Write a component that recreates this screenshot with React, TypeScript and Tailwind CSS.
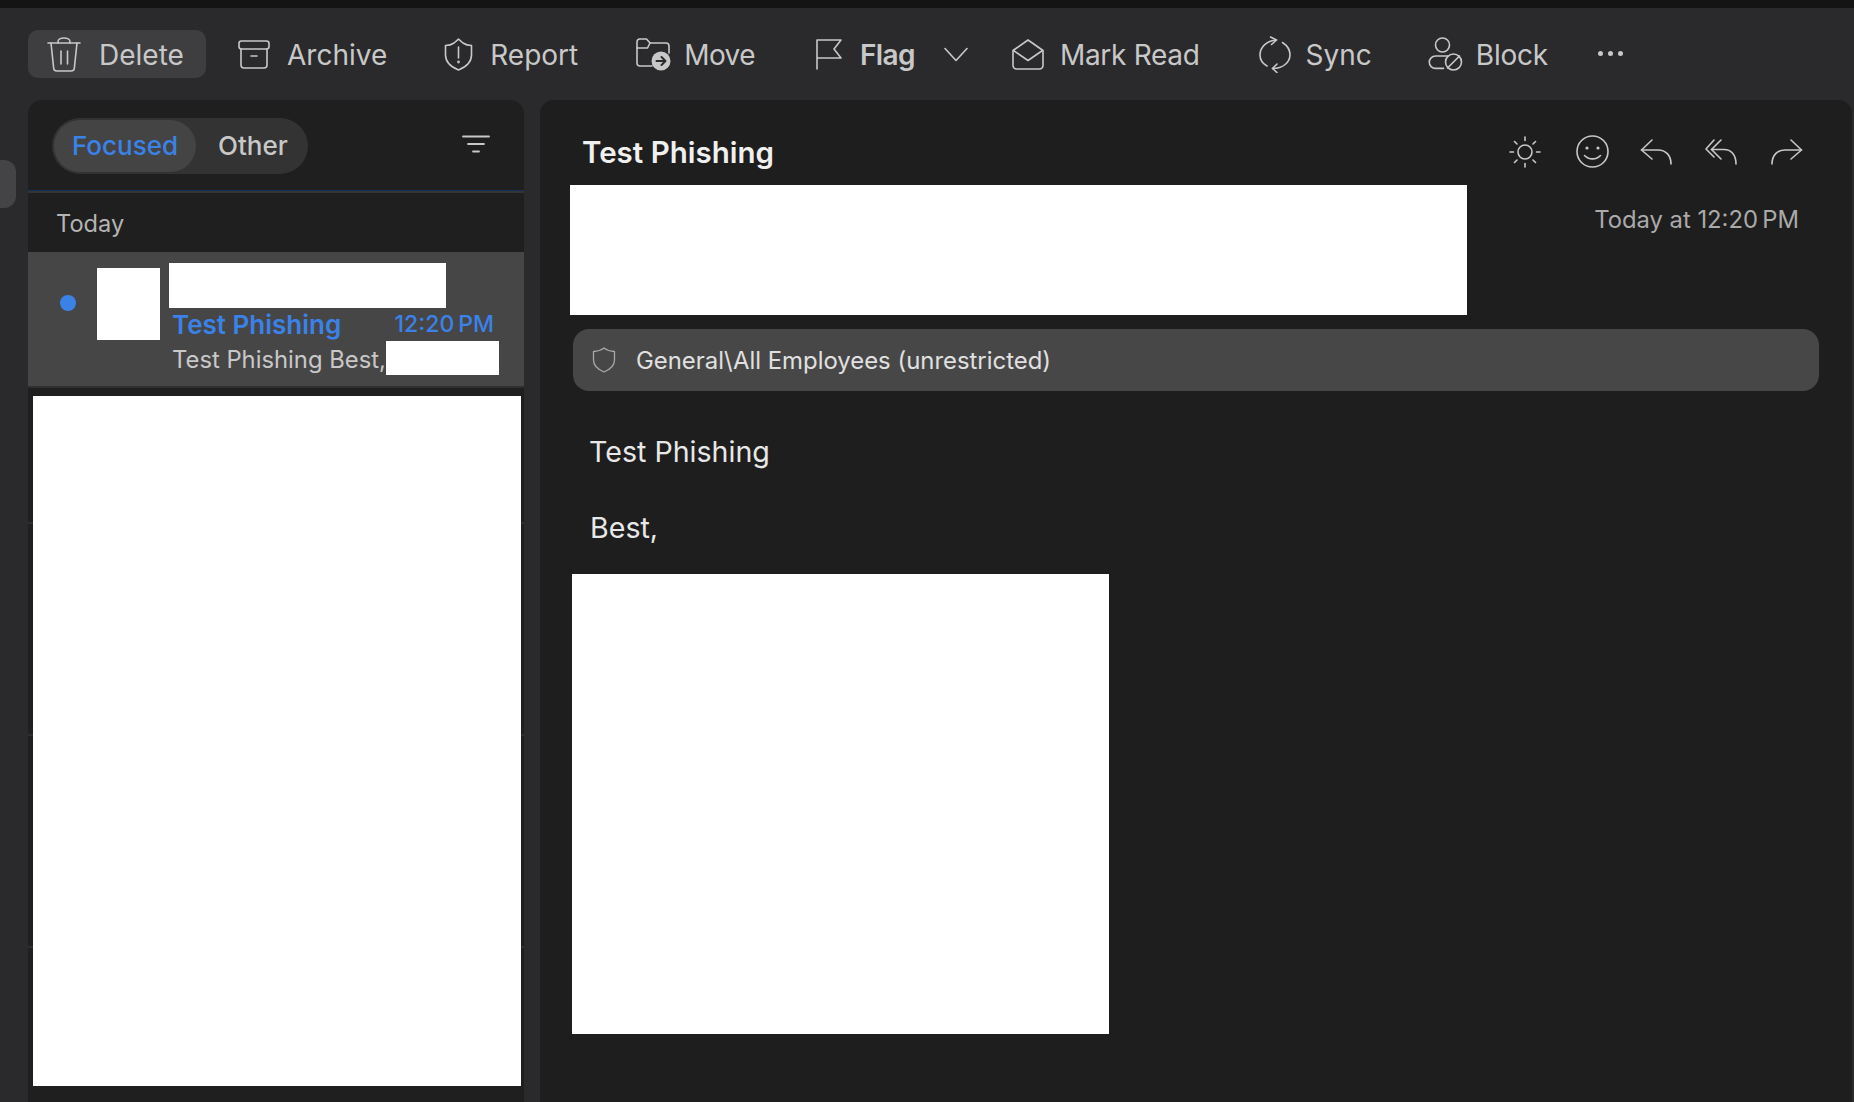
import React from 'react';

const line = { fill: 'none', stroke: 'currentColor', strokeWidth: 1.6, strokeLinecap: 'round', strokeLinejoin: 'round' } as const;

function TrashIcon() {
  return (
    <svg width="34" height="35" viewBox="0 0 34 35" {...line}>
      <path d="M1 6h32" />
      <path d="M11 6V4.500a6 3.500 0 0 1 12 0V6" />
      <path d="M4 6l2.600 24.500A3.500 3.500 0 0 0 10 34h14a3.500 3.500 0 0 0 3.400-3.500L30 6" />
      <path d="M14 14v13M20.500 14v13" />
    </svg>
  );
}

function ArchiveIcon() {
  return (
    <svg width="32" height="29" viewBox="0 0 32 29" {...line}>
      <rect x="1" y="1" width="30" height="8" rx="2.500" />
      <path d="M3 9v16a3 3 0 0 0 3 3h20a3 3 0 0 0 3-3V9" />
      <path d="M13 16h6" />
    </svg>
  );
}

function ShieldAlertIcon() {
  return (
    <svg width="29" height="33" viewBox="0 0 29 33" {...line}>
      <path d="M14.500 1.200 19 5c2.500 1.700 5.200 2.400 8.500 2.500V17c0 6.800-4.600 11.600-13 15C6.100 28.600 1.500 23.800 1.500 17V7.500C4.800 7.400 7.500 6.700 10 5z" />
      <path d="M14.500 9v11" />
      <circle cx="14.500" cy="24" r="0.600" />
    </svg>
  );
}

function MoveIcon() {
  return (
    <svg width="35" height="33" viewBox="0 0 35 33" {...line}>
      <path d="M16 28H4a3 3 0 0 1-3-3V4a3 3 0 0 1 3-3h6.500L14 5h16a3 3 0 0 1 3 3v7" />
      <path d="M1 10h10.500L14 5" />
      <circle cx="25" cy="23" r="9.500" fill="#c8c8c8" stroke="none" />
      <path d="M20.500 23h9M25.500 19l4 4-4 4" stroke="#2a2a2c" strokeWidth="2" />
    </svg>
  );
}

function FlagIcon() {
  return (
    <svg width="26" height="31" viewBox="0 0 26 31" {...line}>
      <path d="M1 30V1h24l-7 9 7 9H1" />
    </svg>
  );
}

function ChevronIcon() {
  return (
    <svg width="24" height="15" viewBox="0 0 24 15" {...line}>
      <path d="M1 1.500 12 13.500 23 1.500" />
    </svg>
  );
}

function MailOpenIcon() {
  return (
    <svg width="32" height="31" viewBox="0 0 32 31" {...line}>
      <path d="M1 11.500 16 1l15 10.500V26.500a3.500 3.500 0 0 1-3.500 3.500h-23A3.500 3.500 0 0 1 1 26.500z" />
      <path d="M1.500 11.500 16 21.500l14.500-10" />
    </svg>
  );
}

function SyncIcon() {
  return (
    <svg width="32" height="37" viewBox="0 0 32 37" {...line}>
      <path d="M8 30C3.500 27.500 1 23.500 1 19 1 11 8 4.500 17.500 4" />
      <path d="M23.500 6.500C28 9.500 31 14 31 18.500 31 26.500 24 32.500 13.500 32.500" />
      <path d="M11.500 1l6 3-5 4.500" />
      <path d="M18 28l-4.500 4.500 4.500 4" />
    </svg>
  );
}

function BlockUserIcon() {
  return (
    <svg width="35" height="34" viewBox="0 0 35 34" {...line}>
      <circle cx="14.500" cy="8" r="7" />
      <path d="M20 19H7.500a6.200 6.200 0 0 0 0 12.400H15.500" />
      <circle cx="25.500" cy="25" r="8" />
      <path d="M19.500 31l12-12" />
    </svg>
  );
}

function FilterIcon() {
  return (
    <svg width="28" height="18" viewBox="0 0 28 18" {...line} strokeWidth="1.800" className="mb-[4px] text-[#c8c8c8]">
      <path d="M1 1.500h26M6 9h16M11 16.500h6" />
    </svg>
  );
}

function SunIcon() {
  return (
    <svg width="32" height="32" viewBox="0 0 32 32" {...line}>
      <circle cx="16" cy="16" r="7" />
      <path d="M16 1v3.500M16 27.500V31M1 16h3.500M27.500 16H31M5.500 5.500 8 8M24 24l2.500 2.500M26.500 5.500 24 8M8 24l-2.500 2.500" />
    </svg>
  );
}

function SmileIcon() {
  return (
    <svg width="33" height="33" viewBox="0 0 33 33" {...line}>
      <circle cx="16.500" cy="16.500" r="15.500" />
      <circle cx="11" cy="13" r="1.600" fill="currentColor" stroke="none" />
      <circle cx="22" cy="13" r="1.600" fill="currentColor" stroke="none" />
      <path d="M8.500 20.500c4 4.500 12 4.500 16 0" />
    </svg>
  );
}

function ReplyIcon() {
  return (
    <svg width="33" height="26" viewBox="0 0 33 26" {...line}>
      <path d="M12 1 1.500 11 12 20" />
      <path d="M1.500 11H18c7.500 0 13 5 13 14" />
    </svg>
  );
}

function ReplyAllIcon() {
  return (
    <svg width="33" height="26" viewBox="0 0 33 26" {...line}>
      <path d="M9 1 1 10l8 8" />
      <path d="M16 1 6.500 10.500 16 20" />
      <path d="M6.500 10.500H19c7 0 12 5 12 14.500" />
    </svg>
  );
}

function ForwardIcon() {
  return (
    <svg width="33" height="26" viewBox="0 0 33 26" {...line}>
      <path d="M21 1l10.500 10L21 20" />
      <path d="M31.500 11H15C7.500 11 2 16 2 25" />
    </svg>
  );
}

function LabelShieldIcon() {
  return (
    <svg width="24" height="26" viewBox="0 0 24 26" {...line} strokeWidth="1.300" className="text-[#a8a8a8]">
      <path d="M12 1c2.800 2.200 6 3.300 10.500 3.500V13c0 5.500-4 9.300-10.500 12C5.500 22.300 1.500 18.500 1.500 13V4.500C6 4.300 9.200 3.200 12 1z" />
    </svg>
  );
}

const actions = [
  { label: 'Archive', icon: ArchiveIcon, ml: 'ml-[32px]', gap: 'gap-[17px]', text: '' },
  { label: 'Report', icon: ShieldAlertIcon, ml: 'ml-[57px]', gap: 'gap-[17px]', text: '' },
  { label: 'Move', icon: MoveIcon, ml: 'ml-[58px]', gap: 'gap-[13px]', text: 'tracking-[-0.6px]' },
];

const trailingActions = [
  { label: 'Mark Read', icon: MailOpenIcon, ml: 'ml-[44px]', gap: 'gap-[16px]', text: 'tracking-[-0.3px]' },
  { label: 'Sync', icon: SyncIcon, ml: 'ml-[59px]', gap: 'gap-[15px]', text: '' },
  { label: 'Block', icon: BlockUserIcon, ml: 'ml-[56px]', gap: 'gap-[13px]', text: 'tracking-[-0.2px]' },
];

export default function App() {
  return (
    <div className="flex h-screen w-full flex-col overflow-hidden bg-[#2a2a2c] font-['Inter',sans-serif]">
      <div className="h-[8px] shrink-0 bg-[#141414]" />

      <header className="flex h-[92px] shrink-0 items-center pl-[28px] text-[28px] text-[#c8c8c8]">
        <button className="flex h-[48px] w-[178px] items-center gap-[18px] rounded-[10px] bg-[#3e3e40] pl-[19px]">
          <TrashIcon />
          <span className="pt-[2px]">Delete</span>
        </button>
        {actions.map((action) => (
          <button key={action.label} className={`flex items-center ${action.ml} ${action.gap}`}>
            <action.icon />
            <span className={`pt-[2px] ${action.text}`}>{action.label}</span>
          </button>
        ))}
        <button className="ml-[61px] flex items-center gap-[18px]">
          <FlagIcon />
          <span className="pt-[2px] font-semibold tracking-[-0.6px]">Flag</span>
        </button>
        <button className="ml-[29px]">
          <ChevronIcon />
        </button>
        {trailingActions.map((action) => (
          <button key={action.label} className={`flex items-center ${action.ml} ${action.gap}`}>
            <action.icon />
            <span className={`pt-[2px] ${action.text}`}>{action.label}</span>
          </button>
        ))}
        <button className="ml-[50px] flex gap-[5px] pb-[2px]">
          <span className="h-[5px] w-[5px] rounded-full bg-[#c8c8c8]" />
          <span className="h-[5px] w-[5px] rounded-full bg-[#c8c8c8]" />
          <span className="h-[5px] w-[5px] rounded-full bg-[#c8c8c8]" />
        </button>
      </header>

      <div className="flex min-h-0 flex-1 pr-[2px]">
        <div className="w-[28px] shrink-0 pt-[60px]">
          <div className="h-[48px] w-[16px] rounded-r-[12px] bg-[#444446]" />
        </div>

        <aside className="relative w-[496px] shrink-0 rounded-t-[14px] bg-[#1f1f1f]">
          <div className="flex h-[93px] items-center justify-between border-b-2 border-[#333333] pr-[34px] pl-[24px] shadow-[inset_0_-1px_0_#12305a]">
            <div className="flex h-[56px] w-[256px] items-center rounded-full bg-[#333333] px-[2px] text-[26px] font-medium">
              <span className="flex h-[52px] w-[142px] items-center justify-center rounded-full bg-[#444444] text-[#3b82e8]">
                Focused
              </span>
              <span className="ml-[22px] text-[#c8c8c8]">Other</span>
            </div>
            <FilterIcon />
          </div>

          <div className="flex h-[59px] items-center pt-[2px] pl-[28px] text-[23.600px] text-[#b4b4b4]">Today</div>

          <div className="flex h-[136px] items-start border-b-2 border-[#2e2e2e] bg-[#464646]">
            <span className="mt-[43px] ml-[32px] h-[16px] w-[16px] rounded-full bg-[#3b82e8]" />
            <div className="mt-[16px] ml-[21px] h-[72px] w-[63px] bg-white" />
            <div className="mt-[11px] ml-[9px] flex-1">
              <div className="h-[45px] w-[277px] bg-white" />
              <div className="mt-[1px] flex h-[32px] items-center justify-between pr-[30px] pb-[2px] pl-[3px] text-[#3b82e8]">
                <span className="text-[26px] font-semibold">Test Phishing</span>
                <span className="text-[23px] font-medium">12:20{'\u202f'}PM</span>
              </div>
              <div className="flex h-[34px] items-center pl-[3px] text-[23.800px] text-[#c8c8c8]">
                <span className="pt-[3px]">Test Phishing Best,</span>
                <span className="h-[34px] w-[113px] shrink-0 bg-white" />
              </div>
            </div>
          </div>

          <div className="h-[136px] border-b-2 border-[#2e2e2e]" />
          <div className="h-[212px] border-b-2 border-[#2e2e2e]" />
          <div className="h-[212px] border-b-2 border-[#2e2e2e]" />

          {/* redacted message rows */}
          <div className="absolute top-[296px] left-[5px] h-[690px] w-[488px] bg-white" />
        </aside>

        <main className="ml-[16px] min-w-0 flex-1 rounded-t-[14px] bg-[#1e1e1e]">
          <div className="flex h-[85px] items-start justify-between pt-[34px] pr-[49px] pl-[42px]">
            <h1 className="text-[29.500px] font-semibold leading-[36px] text-[#f0f0f0]">Test Phishing</h1>
            <div className="mt-[1px] flex items-center gap-[32px] text-[#c8c8c8]">
              <SunIcon />
              <div className="mr-[-1px] ml-[3px]">
                <SmileIcon />
              </div>
              <ReplyIcon />
              <ReplyAllIcon />
              <ForwardIcon />
            </div>
          </div>

          <div className="flex items-start justify-between pr-[53px] pl-[30px]">
            <div className="h-[130px] w-[897px] bg-white" />
            <span className="mt-[20px] text-[23.800px] leading-[30px] text-[#aaaaaa]">Today at 12:20{'\u202f'}PM</span>
          </div>

          <div className="mt-[14px] mr-[33px] ml-[33px] flex h-[62px] items-center gap-[20px] rounded-[16px] bg-[#474747] pl-[19px]">
            <LabelShieldIcon />
            <span className="pt-[1px] text-[23.900px] text-[#e0e0e0]">General\All Employees (unrestricted)</span>
          </div>

          <div className="mt-[43px] ml-[49px] text-[28.600px] leading-[36px] text-[#e8e8e8]">
            <p>Test Phishing</p>
            <p className="mt-[40px] pl-[1px]">Best,</p>
          </div>

          <div className="mt-[28px] ml-[32px] h-[460px] w-[537px] bg-white" />
        </main>
      </div>
    </div>
  );
}
